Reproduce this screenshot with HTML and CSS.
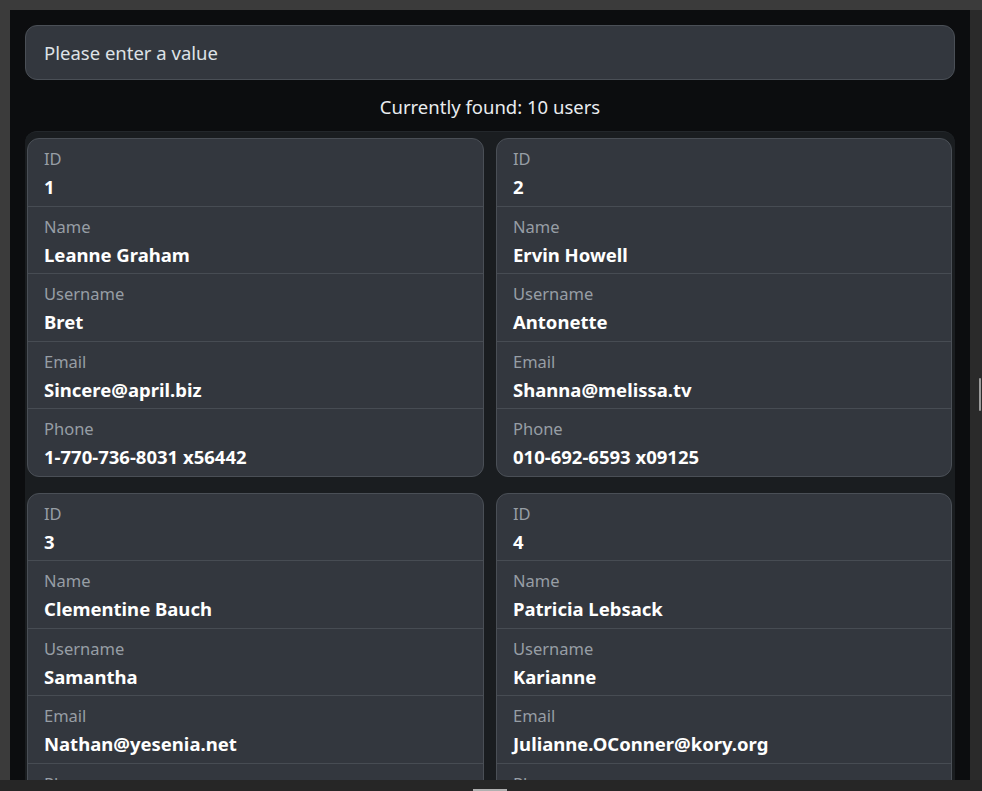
FILE: index.html
```html
<!DOCTYPE html>
<html lang="en">
<head>
<meta charset="utf-8">
<title>Users</title>
<link rel="stylesheet" href="styles.css">
</head>
<body>
<div class="frame">
  <div class="viewport">
    <main class="page">
      <input class="search" type="text" placeholder="Please enter a value">
      <p class="count">Currently found: 10 users</p>
      <section class="grid">
        <div class="card">
          <div class="row"><div class="label">ID</div><div class="value">1</div></div>
          <div class="row"><div class="label">Name</div><div class="value">Leanne Graham</div></div>
          <div class="row"><div class="label">Username</div><div class="value">Bret</div></div>
          <div class="row"><div class="label">Email</div><div class="value">Sincere@april.biz</div></div>
          <div class="row"><div class="label">Phone</div><div class="value">1-770-736-8031 x56442</div></div>
        </div>
        <div class="card">
          <div class="row"><div class="label">ID</div><div class="value">2</div></div>
          <div class="row"><div class="label">Name</div><div class="value">Ervin Howell</div></div>
          <div class="row"><div class="label">Username</div><div class="value">Antonette</div></div>
          <div class="row"><div class="label">Email</div><div class="value">Shanna@melissa.tv</div></div>
          <div class="row"><div class="label">Phone</div><div class="value">010-692-6593 x09125</div></div>
        </div>
        <div class="card">
          <div class="row"><div class="label">ID</div><div class="value">3</div></div>
          <div class="row"><div class="label">Name</div><div class="value">Clementine Bauch</div></div>
          <div class="row"><div class="label">Username</div><div class="value">Samantha</div></div>
          <div class="row"><div class="label">Email</div><div class="value">Nathan@yesenia.net</div></div>
          <div class="row"><div class="label">Phone</div><div class="value">1-463-123-4447</div></div>
        </div>
        <div class="card">
          <div class="row"><div class="label">ID</div><div class="value">4</div></div>
          <div class="row"><div class="label">Name</div><div class="value">Patricia Lebsack</div></div>
          <div class="row"><div class="label">Username</div><div class="value">Karianne</div></div>
          <div class="row"><div class="label">Email</div><div class="value">Julianne.OConner@kory.org</div></div>
          <div class="row"><div class="label">Phone</div><div class="value">493-170-9623 x156</div></div>
        </div>
      </section>
    </main>
    <div class="vscroll"><div class="vthumb"></div></div>
  </div>
  <div class="hscroll"><div class="hthumb"></div></div>
</div>
</body>
</html>
```

FILE: styles.css
```css
* { box-sizing: border-box; }
html, body { margin: 0; padding: 0; }
body {
  background: #3b3b3b;
  width: 982px;
  height: 791px;
  overflow: hidden;
  font-family: "Noto Sans", "Open Sans", sans-serif;
}
.frame {
  padding: 10px 0 0 10px;
  height: 791px;
  display: flex;
  flex-direction: column;
}
.viewport {
  display: flex;
  height: 770px;
  flex: none;
}
.page {
  width: 960px;
  height: 770px;
  overflow: hidden;
  background: #0c0d0f;
  padding: 15px 15px 0 15px;
}
.vscroll {
  width: 12px;
  background: #2a2a2a;
  display: flex;
  justify-content: flex-end;
  padding-right: 1px;
}
.vthumb {
  width: 2px;
  height: 33px;
  margin-top: 368px;
  background: #9a9a9a;
  border-radius: 1px;
}
.hscroll {
  height: 11px;
  margin-left: -10px;
  background: #262626;
  display: flex;
  align-items: flex-end;
}
.hthumb {
  width: 34px;
  height: 2px;
  margin-left: 473px;
  background: #b0b0b0;
}
.search {
  display: block;
  width: 930px;
  height: 55px;
  margin: 0;
  padding: 0 18px;
  background: #33373e;
  border: 1px solid #4a4f56;
  border-radius: 12px;
  font-family: inherit;
  font-size: 18.5px;
  color: #dee2e6;
  outline: none;
}
.search::placeholder { color: #dee2e6; opacity: 1; }
.count {
  margin: 13px 0 11px;
  text-align: center;
  color: #e9ecef;
  font-size: 18.5px;
  line-height: 27px;
}
.grid {
  display: grid;
  grid-template-columns: 457px 456px;
  column-gap: 12px;
  row-gap: 16px;
  padding: 6px 3px 0 2px;
  background: #1a1d20;
  border-top: 1px solid #23272b;
  border-radius: 12px;
}
.card {
  background: #33373e;
  border: 1px solid #4a4f56;
  border-radius: 12px;
  overflow: hidden;
}
.row {
  padding: 7px 16px 4.5px;
  border-bottom: 1px solid #474c53;
}
.row:last-child { border-bottom: none; }
.label {
  color: #979ea5;
  font-size: 16.5px;
  line-height: 26px;
  margin-bottom: 1px;
}
.value {
  color: #ffffff;
  font-weight: 700;
  font-size: 18.5px;
  line-height: 28px;
}
```
